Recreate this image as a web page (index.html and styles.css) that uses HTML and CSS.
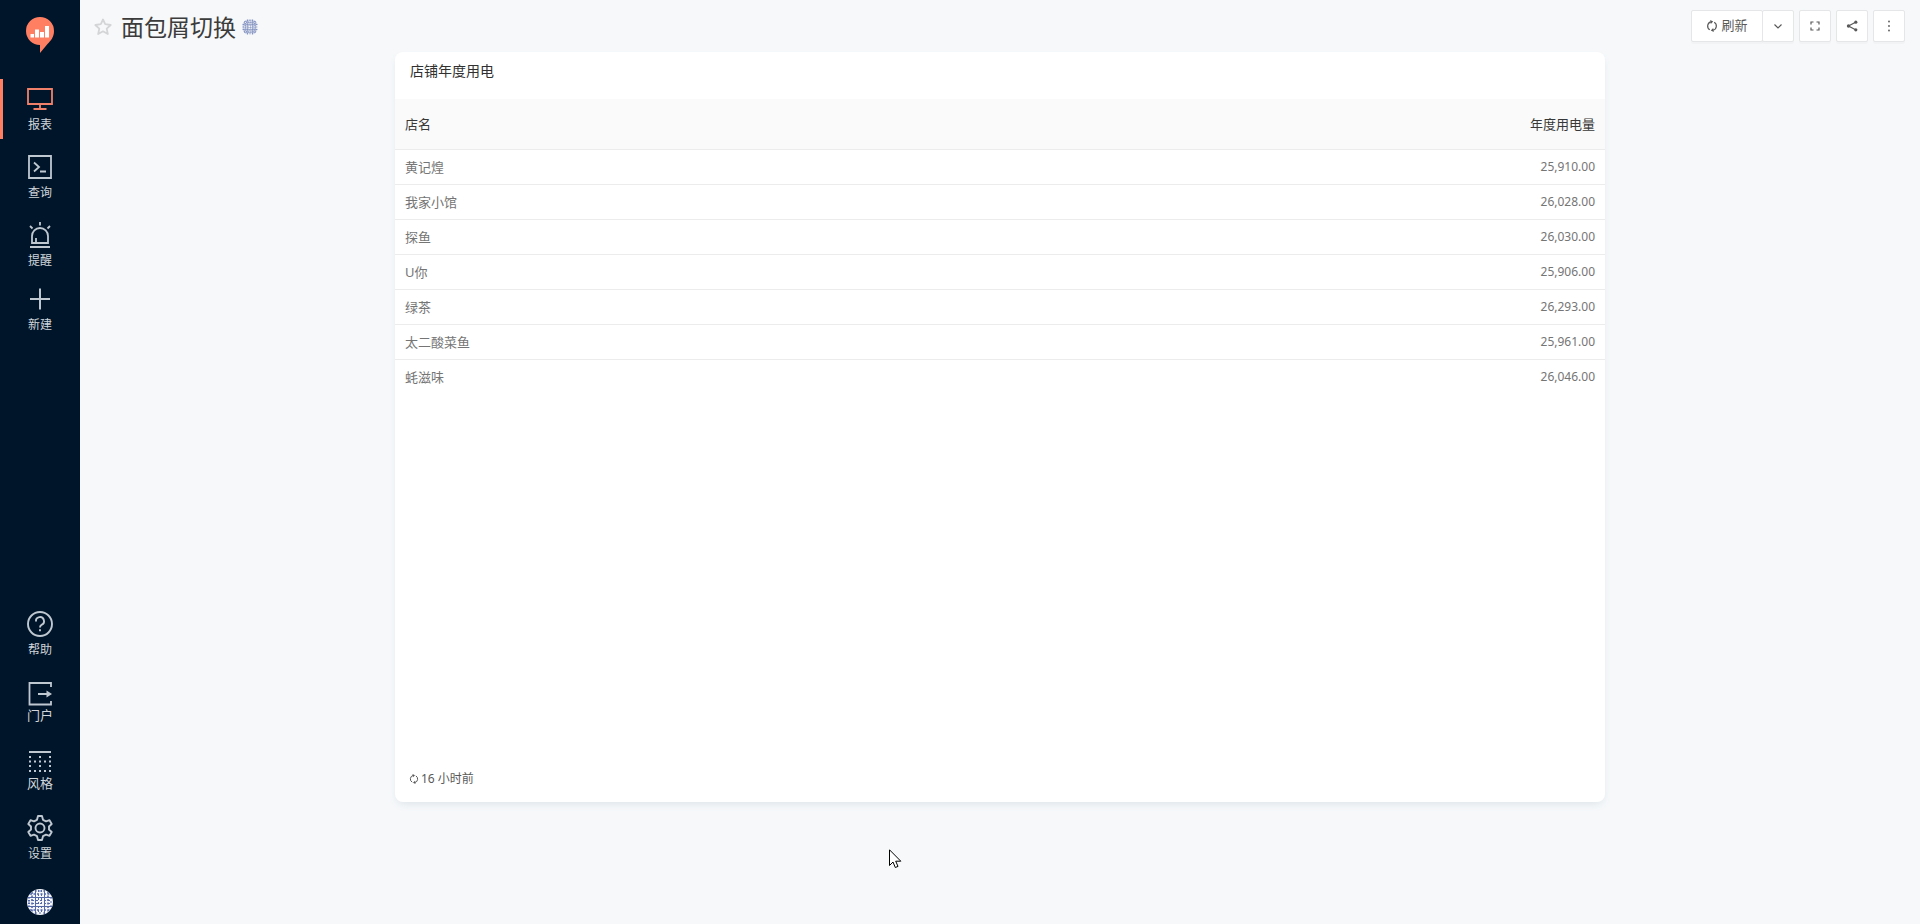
FILE: index.html
```html
<!DOCTYPE html>
<html lang="zh-CN">
<head>
    <meta charset="UTF-8">
    <meta name="viewport" content="width=device-width, initial-scale=1.0">
    <title>面包屑切换</title>
    <link rel="stylesheet" href="styles.css">
</head>
<body>

<!-- Shared icon shapes -->
<svg class="icon-defs" width="0" height="0" aria-hidden="true">
    <clipPath id="avatar-clip"><circle cx="13" cy="13" r="13"/></clipPath>
    <symbol id="icon-refresh" viewBox="0 0 12 12">
        <path d="M3.8 9.8A4.4 4.4 0 0 1 4.8 1.8M8.2 2.2A4.4 4.4 0 0 1 7.2 10.2" fill="none" stroke="currentColor" stroke-width="1.2"/>
        <path d="M4.2 0L7.2 1.6L4.8 4ZM7.8 12L4.8 10.4L7.2 8Z" fill="currentColor"/>
    </symbol>
    <symbol id="icon-avatar" viewBox="0 0 26 26">
        <g clip-path="url(#avatar-clip)">
            <path d="M0 0H26V26H0Z" fill="#f4f6fb"/>
            <g fill="none" stroke="#5468a8">
                <path d="M0 8.5H26M0 17.5H26M8.5 0V26M17.5 0V26"/>
                <path d="M3 5H23M3 21H23M5 3V23M21 3V23" stroke-width="1.6" stroke-dasharray="2 1.5"/>
                <path d="M1 11.5H25M1 14.5H25M11.5 1V25M14.5 1V25" stroke-dasharray="2 2"/>
                <path d="M0 2H26M0 24H26M2 0V26M24 0V26" stroke-dasharray="2 2"/>
            </g>
        </g>
    </symbol>
</svg>

<div class="layout">
    <nav class="sidebar">
        <div class="menu">
            <a class="logo" href="#" aria-label="首页">
                <svg width="30" height="38" viewBox="0 0 30 38">
                    <path d="M15 1A14 14 0 0 1 29 15C29 21 26 24.5 22.5 28L15 37V29A14 14 0 0 1 15 1Z" fill="#ff7f63"/>
                    <path d="M5.5 18h3.5v3.500H5.500zM10 13.500h4v8h-4zM15 16h4v5.500h-4zM20 10h4v11.500h-4z" fill="#fff"/>
                </svg>
            </a>
            <a class="nav-item active" href="#">
                <svg width="26" height="26" viewBox="0 0 26 26" fill="none" stroke="currentColor" stroke-width="1.8">
                    <path d="M1 3H25V18H1ZM13 18V23M6.5 23H19.5"/>
                </svg>
                <span>报表</span>
            </a>
            <a class="nav-item" href="#">
                <svg width="26" height="26" viewBox="0 0 26 26" fill="none" stroke="currentColor" stroke-width="1.8">
                    <path d="M2 2H24V24H2Z"/>
                    <path d="M7 8.5L12 13L7 17.5M13 17.5H19"/>
                </svg>
                <span>查询</span>
            </a>
            <a class="nav-item" href="#">
                <svg width="26" height="26" viewBox="0 0 26 26" fill="none" stroke="currentColor" stroke-width="1.8">
                    <path d="M5 21V14A8 8 0 0 1 21 14V21Z"/>
                    <path d="M3 25H23M9 21V16M13 0V3.5M3 4L5.5 6.5M23 4L20.5 6.5"/>
                </svg>
                <span>提醒</span>
            </a>
            <a class="nav-item create" href="#">
                <svg width="26" height="26" viewBox="0 0 26 26" fill="none" stroke="currentColor" stroke-width="2">
                    <path d="M13 2.5V23.5M3 13H23"/>
                </svg>
                <span>新建</span>
            </a>
        </div>
        <div class="menu">
            <a class="nav-item" href="#">
                <svg width="26" height="26" viewBox="0 0 26 26" fill="none" stroke="currentColor" stroke-width="1.9">
                    <circle cx="13" cy="13" r="12"/>
                    <path d="M9 10.5A4 4 0 1 1 14.5 13.8C13.300 14.400 13 15 13 16.500"/>
                    <path d="M13 18.3V20.3"/>
                </svg>
                <span>帮助</span>
            </a>
            <a class="nav-item large" href="#">
                <svg width="26" height="26" viewBox="0 0 26 26" fill="none" stroke="currentColor" stroke-width="1.8">
                    <path d="M24 6V2H2.5V23.500H24V20M11 13H20"/>
                    <path d="M19.500 9.500L25 13L19.500 16.500Z" fill="currentColor" stroke="none"/>
                </svg>
                <span>门户</span>
            </a>
            <a class="nav-item large" href="#">
                <svg width="26" height="26" viewBox="0 0 26 26" fill="none" stroke="currentColor" stroke-width="2">
                    <path d="M2 3H24"/>
                    <path d="M2 8H24M2 17H24" stroke-dasharray="2 8"/>
                    <path d="M2 12.500H24M2 22H24" stroke-dasharray="2 3"/>
                </svg>
                <span>风格</span>
            </a>
            <a class="nav-item" href="#">
                <svg width="26" height="26" viewBox="0 0 26 26" fill="none" stroke="currentColor" stroke-width="1.9" stroke-linejoin="round">
                    <path d="M11 1H15L16 4.800L19 6.400L22.500 5.200L24.700 9L22 11.500V14.500L24.700 17L22.500 20.800L19 19.600L16 21.200L15 25H11L10 21.200L7 19.600L3.500 20.800L1.300 17L4 14.500V11.500L1.300 9L3.500 5.200L7 6.400L10 4.800Z"/>
                    <circle cx="13" cy="13" r="4.500"/>
                </svg>
                <span>设置</span>
            </a>
            <a class="profile" href="#" aria-label="个人资料">
                <svg width="26" height="26"><use href="#icon-avatar"/></svg>
            </a>
        </div>
    </nav>

    <main class="content">
        <header class="page-header">
            <div class="page-title">
                <button class="favorite" aria-label="收藏">
                    <svg width="18" height="18" viewBox="0 0 18 18" fill="none" stroke="currentColor" stroke-width="1.800" stroke-linejoin="round">
                        <path d="M9 1.500L11.200 6.200L16.700 7L12.700 10.600L13.800 16L9 13.300L4.200 16L5.300 10.600L1.300 7L6.800 6.200Z"/>
                    </svg>
                </button>
                <h1>面包屑切换</h1>
                <svg width="16" height="16"><use href="#icon-avatar"/></svg>
            </div>
            <div class="actions">
                <div class="button-group">
                    <button class="btn btn-refresh">
                        <svg width="12" height="12"><use href="#icon-refresh"/></svg>
                        <span>刷新</span>
                    </button>
                    <button class="btn btn-icon" aria-label="刷新频率">
                        <svg width="10" height="10" viewBox="0 0 10 10" fill="none" stroke="currentColor" stroke-width="1.200">
                            <path d="M1.500 3.500L5 7L8.500 3.500"/>
                        </svg>
                    </button>
                </div>
                <button class="btn btn-icon" aria-label="全屏">
                    <svg width="10" height="10" viewBox="0 0 10 10" fill="none" stroke="currentColor" stroke-width="1.200">
                        <path d="M1 3.500V1H3.500M6.500 1H9V3.500M9 6.500V9H6.500M3.500 9H1V6.500"/>
                    </svg>
                </button>
                <button class="btn btn-icon" aria-label="分享">
                    <svg width="12" height="12" viewBox="0 0 12 12">
                        <path d="M10 2L2.500 6L10 10" fill="none" stroke="currentColor" stroke-width="1.200"/>
                        <g fill="currentColor">
                            <circle cx="9.800" cy="2.200" r="1.600"/>
                            <circle cx="2.500" cy="6" r="1.700"/>
                            <circle cx="9.800" cy="9.800" r="1.600"/>
                        </g>
                    </svg>
                </button>
                <button class="btn btn-icon" aria-label="更多">
                    <svg width="12" height="12" viewBox="0 0 12 12" fill="currentColor">
                        <circle cx="6" cy="1.500" r="0.900"/>
                        <circle cx="6" cy="6" r="0.900"/>
                        <circle cx="6" cy="10.500" r="0.900"/>
                    </svg>
                </button>
            </div>
        </header>

        <section class="widget">
            <h2>店铺年度用电</h2>
            <table>
                <thead>
                    <tr><th>店名</th><th class="number">年度用电量</th></tr>
                </thead>
                <tbody>
                    <tr><td>黄记煌</td><td class="number">25,910.00</td></tr>
                    <tr><td>我家小馆</td><td class="number">26,028.00</td></tr>
                    <tr><td>探鱼</td><td class="number">26,030.00</td></tr>
                    <tr><td>U你</td><td class="number">25,906.00</td></tr>
                    <tr><td>绿茶</td><td class="number">26,293.00</td></tr>
                    <tr><td>太二酸菜鱼</td><td class="number">25,961.00</td></tr>
                    <tr><td>蚝滋味</td><td class="number">26,046.00</td></tr>
                </tbody>
            </table>
            <footer class="widget-footer">
                <svg width="10" height="10"><use href="#icon-refresh"/></svg>
                <span>16 小时前</span>
            </footer>
        </section>
    </main>
</div>

<svg class="cursor" width="13" height="20" viewBox="0 0 13 20" aria-hidden="true">
    <path d="M0.500 0.800V16.500L4 13L6.300 18.500L9 17.400L6.700 12.200H11.800Z" fill="#fff" stroke="#000" stroke-width="1"/>
</svg>

</body>
</html>
```

FILE: styles.css
```css
* {
    box-sizing: border-box;
}

body {
    margin: 0;
    font-family: "Noto Sans", "Noto Sans CJK SC", sans-serif;
    font-size: 13px;
    color: #595959;
    background-color: #f6f8fa;
}

h1, h2 {
    margin: 0;
    font-weight: normal;
}

svg {
    display: block;
    flex-shrink: 0;
}

.icon-defs {
    position: absolute;
}

.layout {
    display: flex;
    min-height: 100vh;
}

/* Sidebar */
.sidebar {
    display: flex;
    flex-direction: column;
    justify-content: space-between;
    flex: 0 0 80px;
    background-color: #001529;
}

.menu {
    display: flex;
    flex-direction: column;
    gap: 8px;
}

.logo {
    display: flex;
    justify-content: center;
    height: 71px;
    padding-top: 16px;
}

.nav-item {
    display: flex;
    flex-direction: column;
    align-items: center;
    gap: 4px;
    height: 60px;
    padding-top: 7px;
    border-left: 3px solid transparent;
    border-right: 3px solid transparent;
    color: #bfc8d1;
    font-size: 12px;
    line-height: 18px;
    text-decoration: none;
}

.nav-item span {
    color: #d0d6db;
}

.nav-item.active {
    border-left-color: #ff7f63;
    color: #f0806a;
}

.nav-item.create {
    padding-top: 3px;
}

.nav-item.large {
    gap: 0;
    padding-top: 9px;
    font-size: 13px;
    line-height: 16px;
}

.profile {
    display: flex;
    justify-content: center;
    height: 48px;
    padding-top: 13px;
}

/* Page header */
.content {
    flex: 1;
    min-width: 0;
}

.page-header {
    display: flex;
    justify-content: space-between;
    height: 52px;
    padding: 10px 15px 0 14px;
}

.page-title {
    display: flex;
    align-items: center;
    height: 34px;
}

.page-title h1 {
    margin: 0 6px 0 9px;
    font-size: 23px;
    line-height: 34px;
    color: #3c3c3c;
}

.favorite {
    padding: 0;
    border: none;
    background: none;
    color: #d4d5d7;
    cursor: pointer;
}

.actions {
    display: flex;
    gap: 5px;
}

.button-group {
    display: flex;
}

.btn {
    display: flex;
    align-items: center;
    justify-content: center;
    height: 32px;
    padding: 0;
    border: 1px solid #e4e6e8;
    border-radius: 2px;
    background-color: #fff;
    box-shadow: 0 2px 0 rgba(0, 0, 0, 0.02);
    color: #595959;
    font-family: inherit;
    font-size: 13px;
    line-height: 20px;
    cursor: pointer;
}

.btn-icon {
    width: 32px;
}

.btn-refresh {
    gap: 3px;
    width: 72px;
    margin-right: -1px;
}

.btn-refresh span {
    padding-bottom: 2px;
}

.btn:hover {
    border-color: #ff7f63;
}

/* Widget */
.widget {
    display: flex;
    flex-direction: column;
    width: 100%;
    max-width: 1210px;
    min-height: 750px;
    margin: 0 auto;
    border-radius: 8px;
    background-color: #fff;
    box-shadow: 0 4px 9px -3px rgba(102, 136, 153, 0.2);
}

.widget h2 {
    height: 47px;
    padding: 8px 15px 0;
    font-size: 14px;
    line-height: 22px;
    color: #303030;
}

table {
    width: 100%;
    border-collapse: separate;
    border-spacing: 0;
}

th, td {
    height: 35px;
    padding: 0 10px;
    border-bottom: 1px solid #ececec;
    font-size: 13px;
    line-height: 20px;
    text-align: left;
    color: #757575;
}

th {
    height: 51px;
    background-color: #fafafa;
    font-weight: normal;
    color: #383838;
}

tbody tr:last-child td {
    height: 34px;
    border-bottom: none;
}

.number {
    text-align: right;
}

td.number {
    font-size: 12px;
}

.widget-footer {
    display: flex;
    align-items: center;
    gap: 2px;
    margin-top: auto;
    padding: 0 14px 14px;
    font-size: 12px;
    line-height: 18px;
}

/* Mouse pointer */
.cursor {
    position: absolute;
    top: 849px;
    left: 889px;
}
```
